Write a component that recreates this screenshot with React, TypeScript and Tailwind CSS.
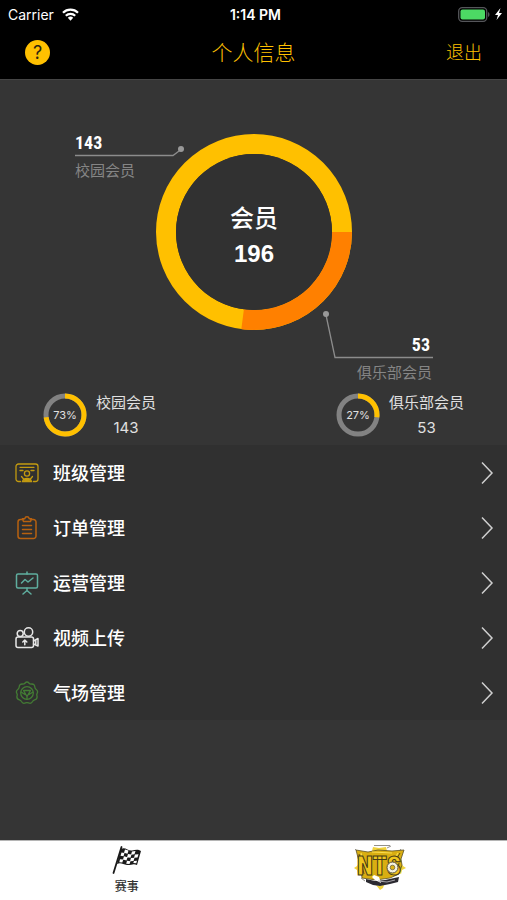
import React from "react";

const campus = 143;
const club = 53;
const total = campus + club;

const menu = [
  { id: "class", label: "班级管理", icon: <ClassIcon /> },
  { id: "order", label: "订单管理", icon: <OrderIcon /> },
  { id: "operation", label: "运营管理", icon: <OperationIcon /> },
  { id: "video", label: "视频上传", icon: <VideoIcon /> },
  { id: "field", label: "气场管理", icon: <FieldIcon /> },
];

function ClassIcon() {
  return (
    <svg width="24" height="24" viewBox="0 0 24 24" fill="none" stroke="#c29a10" strokeWidth="1.3" strokeLinecap="round">
      <path d="M5.500 20.500H3.500A2.500 2.500 0 0 1 1 18V5.500A2.500 2.500 0 0 1 3.500 3h17A2.500 2.500 0 0 1 23 5.500V18a2.500 2.500 0 0 1-2.500 2.500h-2" />
      <path d="M5 6.300h14M5 9.500h3M16 9.500h3" />
      <circle cx="12" cy="12.500" r="2.600" />
      <path d="M6.500 15.500l2.500 3M17.500 15.500l-2.500 3M7.500 20.500c1-4 8-4 9 0zM9.500 19h5" />
    </svg>
  );
}

function OrderIcon() {
  return (
    <svg width="24" height="24" viewBox="0 0 24 24" fill="none" stroke="#b8610f" strokeWidth="1.5" strokeLinecap="round" strokeLinejoin="round">
      <path d="M8 3.500H5.500a2.500 2.500 0 0 0-2.500 2.500v14a2.500 2.500 0 0 0 2.500 2.500h13a2.500 2.500 0 0 0 2.500-2.500V6a2.500 2.500 0 0 0-2.500-2.500H16" />
      <path d="M7.500 2.700h2.300C10.300.2 13.700.2 14.200 2.700h2.300L15.500 5.500h-7z" />
      <path d="M7.500 9.500h9M7.500 13.500h9M7.500 17.500h9" />
    </svg>
  );
}

function OperationIcon() {
  return (
    <svg width="24" height="24" viewBox="0 0 24 24" fill="none" stroke="#5fae9f" strokeWidth="1.5" strokeLinecap="round" strokeLinejoin="round">
      <path d="M12 1v2M12 17v3M8 23l4-3.500 4 3.500" />
      <rect x="1.500" y="3" width="21" height="14" rx="1.500" />
      <path d="M6.500 12l3.500-3.500 3 2.500L18 7" />
    </svg>
  );
}

function VideoIcon() {
  return (
    <svg width="24" height="24" viewBox="0 0 24 24" fill="none" stroke="#e6e6e6" strokeWidth="1.5" strokeLinecap="round" strokeLinejoin="round">
      <circle cx="5.200" cy="7.500" r="3" />
      <circle cx="13.500" cy="6" r="4.200" />
      <rect x="1" y="11" width="17.500" height="10.500" rx="2" />
      <path d="M18.500 15l4.500-2.500v7.500l-4.500-2M20.800 14v4.800M9.800 18.800v-4.500M7.800 16l2-2 2 2" />
    </svg>
  );
}

function FieldIcon() {
  return (
    <svg width="24" height="24" viewBox="0 0 24 24" fill="none" stroke="#437c34" strokeWidth="1.3" strokeLinecap="round" strokeLinejoin="round">
      <path d="M9.900 2.200Q12-.2 14.100 2.200Q15 3.200 16.500 3Q19.800 2.800 19.800 6Q19.900 7.300 21 8.300Q23.500 10 22.100 12.500Q21.500 13.700 22 15Q22.600 18 19.600 18.800Q18.200 19.200 17.700 20.300Q16.300 23.200 13.500 21.900Q12 21.200 10.500 21.900Q7.700 23.200 6.300 20.300Q5.800 19.200 4.400 18.800Q1.400 18 2 15Q2.500 13.700 1.900 12.500Q.5 10 3 8.300Q4.100 7.300 4.200 6Q4.200 2.800 7.500 3Q9 3.200 9.900 2.200z" />
      <circle cx="12" cy="12" r="6.300" />
      <path d="M8.500 9.500h7L12 15.500zM6 11l4 2.500M18 11l-4 2.500M12 15.500V18" />
    </svg>
  );
}

function StatusBar() {
  return (
    <div className="grid h-7 grid-cols-3 items-center pl-2 pr-1 text-white">
      <div className="flex items-center gap-2 text-[14px]">
        Carrier
        <svg width="17" height="13" viewBox="0 0 17 13" fill="none" stroke="white" strokeWidth="2.2">
          <path d="M1 4.800a10.500 10.500 0 0 1 15 0M3.800 7.800a6.700 6.700 0 0 1 9.400 0" />
          <path d="M5.800 9.800a4 4 0 0 1 5.400 0L8.500 12.800z" fill="white" stroke="none" />
        </svg>
      </div>
      <div className="text-center text-[14px] font-semibold">1:14 PM</div>
      <div className="flex items-center justify-end gap-1">
        <svg width="32" height="15" viewBox="0 0 32 15">
          <rect x="0.700" y="0.700" width="28" height="13.600" rx="3.500" fill="none" stroke="#55565a" strokeWidth="1.3" />
          <rect x="2.500" y="2.500" width="24.500" height="10" rx="2" fill="#4cd964" />
          <path d="M30 5v5c2-.8 2-4.200 0-5z" fill="#55565a" />
        </svg>
        <svg width="9" height="12" viewBox="0 0 9 12" fill="white">
          <path d="M6.500 0L1 7h3L2.500 12 8 5H5z" />
        </svg>
      </div>
    </div>
  );
}

function MemberChart() {
  const length = 2 * Math.PI * 88;
  return (
    <svg className="h-[310px] w-full" viewBox="0 0 507 310" role="img" aria-label="会员">
      <g fill="none" strokeWidth="20">
        <circle cx="254" cy="152" r="88" stroke="#ffc000" />
        <circle cx="254" cy="152" r="88" stroke="#ff8000" strokeDasharray={`${(club / total) * length} ${length}`} />
      </g>
      <circle cx="254" cy="152" r="78" fill="#313131" />
      <g fill="none" stroke="#8c8c8c" strokeWidth="1.3">
        <path d="M75 75.500h98l8-6" />
        <path d="M326 235l9 42.500h98" />
      </g>
      <circle cx="181" cy="69" r="3" fill="#999999" />
      <circle cx="326" cy="234" r="3" fill="#999999" />

      <g fill="white" textAnchor="middle" className="text-[24px] font-bold">
        <text x="254" y="147" className="font-medium">会员</text>
        <text x="254" y="182" className="font-['Liberation_Sans']">{total}</text>
      </g>
      <g fill="white" className="font-['Liberation_Sans_Narrow','Roboto_Condensed','Roboto',sans-serif] text-[18px] font-bold">
        <text x="75" y="69">{campus}</text>
        <text x="430" y="271" textAnchor="end">{club}</text>
      </g>
      <g fill="#858585" className="text-[15px]">
        <text x="75" y="96">校园会员</text>
        <text x="432" y="298" textAnchor="end">俱乐部会员</text>
      </g>
    </svg>
  );
}

function Share({ label, count, percent }: { label: string; count: number; percent: number }) {
  return (
    <div className="flex items-center gap-[9px]">
      <svg width="44" height="44" viewBox="0 0 44 44">
        <circle cx="22" cy="22" r="19" fill="none" stroke="#828282" strokeWidth="5" />
        <circle
          cx="22"
          cy="22"
          r="19"
          fill="none"
          stroke="#ffc000"
          strokeWidth="5"
          pathLength="100"
          strokeDasharray={`${percent} 100`}
          transform="rotate(-90 22 22)"
        />
        <text x="22" y="26" textAnchor="middle" fill="#e0e0e0" className="text-[11px]">{percent}%</text>
      </svg>
      <div className="text-center text-[15px] leading-[25px] text-[#e0e0e0]">
        <div>{label}</div>
        <div>{count}</div>
      </div>
    </div>
  );
}

function FlagIcon() {
  return (
    <svg width="30" height="28" viewBox="0 0 30 28">
      <path d="M9.500 1L1.500 27" stroke="#1a1a1a" strokeWidth="1.8" strokeLinecap="round" />
      <path d="M9 3c4-2.500 7 2 11 1.500 3-.5 6-1.500 9 .5l-4 14c-4-2-6 .5-10 0-4-.3-6-3-10-1z" fill="#1a1a1a" />
      <g fill="white">
        <path d="M13 3.500l3.500 1-1 3.300-3.500-1zM20 5.500l3.500-.5-1 3.300-3.500.5zM9.500 6.500l3 .5-1 3.300-3-.5zM16 8l3.500.5-1 3.300-3.500-.5zM23 8.500l3.500-.2-1 3.300-3.500.2zM12 10.300l3.500 1-1 3.200-3.500-1zM19 12l3.500-.2-1 3.200-3.500.2zM8 13.300l3.300.2-1 3-3-.2zM15 14.800l3.500.5-1 2.700-3.300-.2zM22 15l3-.2-.7 2.500-3-.2z" />
      </g>
    </svg>
  );
}

function ClubLogo() {
  return (
    <svg width="56" height="50" viewBox="0 0 56 50">
      <path d="M7 20l-2 3-3 2 3 2 1 5 3-1V20zM49 20l2 3 3 2-4 2-1 4-3-2zM21 4l6 1 7-1 1 4H20zM24 42l3 1 5-1-1 3-3 2z" fill="#f0d33c" />
      <path d="M22 2.500h16M35 5l4-2M3 6l3 3M49 6l-3 4M9 35l4 3" stroke="#77756c" strokeWidth="0.8" />
      <path d="M14 36l9 2 10-1 14-3-1 5-8 2-10 2-7-1-7-3z" fill="#2b2930" />
      <path d="M4 7l12 2 10-2 14 1 12-1-3 9 1 6-3 9-9 4-14 2-14-2-1-9z" fill="#d9ae12" stroke="#5c5026" strokeWidth="0.8" />
      <path d="M7 11l5 20M48 10l-4 7M47 20l-2 10" stroke="#5c4a10" strokeWidth="1" />
      <path d="M9 10l4 16M46 10l-3 5M20 9l20 1" stroke="#f8dc4f" strokeWidth="1.2" />
      <path d="M22 32l5 2 2 6-6-3-3-3z" fill="white" />
      <text
        x="27"
        y="32"
        textAnchor="middle"
        fill="#f0c61e"
        stroke="#453b17"
        strokeWidth="1"
        className="font-['Roboto_Condensed','Roboto',sans-serif] text-[26px] font-black"
      >
        NTS
      </text>
      <circle cx="40.500" cy="24.500" r="5.500" fill="#f5f1df" stroke="#5a533c" strokeWidth="1" />
      <circle cx="40.500" cy="24.500" r="2.300" fill="#dcb417" stroke="#5a533c" strokeWidth="0.7" />
      <path d="M26 38l9 1 8-2" fill="none" stroke="#a7a5ab" strokeWidth="1" />
    </svg>
  );
}

export default function App() {
  return (
    <div className="flex min-h-screen flex-col bg-[#353535] font-['Liberation_Sans','Noto_Sans_CJK_SC',sans-serif]">
      <header className="border-b border-[#454545] bg-black font-['Inter','Noto_Sans_CJK_SC',sans-serif]">
        <StatusBar />
        <nav className="grid h-[51px] grid-cols-3 items-center px-[25px] pb-[2px] text-[#ffc000]">
          <button aria-label="帮助" className="size-[25px] rounded-full bg-[#ffc000] text-[18px] leading-[25px] text-[#2b2412]">
            ?
          </button>
          <h1 className="text-center text-[21px] font-light">个人信息</h1>
          <button className="justify-self-end text-[18px] font-light">退出</button>
        </nav>
      </header>

      <main className="flex-1">
        <MemberChart />
        <div className="flex items-center justify-between px-[43px] pb-[5px] font-['Inter','Noto_Sans_CJK_SC',sans-serif]">
          <Share label="校园会员" count={campus} percent={73} />
          <Share label="俱乐部会员" count={club} percent={27} />
        </div>

        <ul className="bg-[#303030] font-['Noto_Sans_CJK_SC',sans-serif]">
          {menu.map((m) => (
            <li key={m.id}>
              <a href={`#${m.id}`} className="flex h-[55px] items-center gap-[14px] pl-[15px] pr-[13px] text-[18px] font-medium text-white">
                {m.icon}
                <span className="flex-1">{m.label}</span>
                <svg width="14" height="24" viewBox="0 0 14 24" fill="none" stroke="#cfcfcf" strokeWidth="1.5">
                  <path d="M2 1.500L12 12 2 22.500" />
                </svg>
              </a>
            </li>
          ))}
        </ul>
      </main>

      <footer className="grid h-[60px] grid-cols-2 border-t border-[#b5b5b5] bg-white font-['Noto_Sans_CJK_SC',sans-serif]">
        <a href="#match" className="flex flex-col items-center pt-[5px] text-[12px] leading-[24px] font-medium text-[#333333]">
          <FlagIcon />
          赛事
        </a>
        <a href="#club" aria-label="俱乐部" className="flex justify-center pt-[2px]">
          <ClubLogo />
        </a>
      </footer>
    </div>
  );
}
